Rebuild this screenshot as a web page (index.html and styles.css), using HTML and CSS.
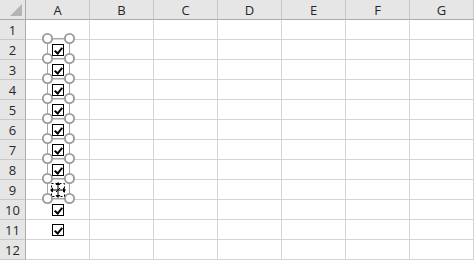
FILE: index.html
```html
<!DOCTYPE html>
<html lang="en">
<head>
  <meta charset="UTF-8">
  <title>Checkboxes</title>
  <link rel="stylesheet" href="styles.css">
</head>
<body>
  <div class="sheet">
    <div class="grid">
      <!-- header row -->
      <div class="corner"><span class="corner-tri"></span></div>
      <div class="col-head">A</div>
      <div class="col-head">B</div>
      <div class="col-head">C</div>
      <div class="col-head">D</div>
      <div class="col-head">E</div>
      <div class="col-head">F</div>
      <div class="col-head">G</div>

      <div class="row-head">1</div><div class="cell"></div><div class="cell"></div><div class="cell"></div><div class="cell"></div><div class="cell"></div><div class="cell"></div><div class="cell"></div>
      <div class="row-head">2</div><div class="cell"><span class="box"></span></div><div class="cell"></div><div class="cell"></div><div class="cell"></div><div class="cell"></div><div class="cell"></div><div class="cell"></div>
      <div class="row-head">3</div><div class="cell"><span class="box"></span></div><div class="cell"></div><div class="cell"></div><div class="cell"></div><div class="cell"></div><div class="cell"></div><div class="cell"></div>
      <div class="row-head">4</div><div class="cell"><span class="box"></span></div><div class="cell"></div><div class="cell"></div><div class="cell"></div><div class="cell"></div><div class="cell"></div><div class="cell"></div>
      <div class="row-head">5</div><div class="cell"><span class="box"></span></div><div class="cell"></div><div class="cell"></div><div class="cell"></div><div class="cell"></div><div class="cell"></div><div class="cell"></div>
      <div class="row-head">6</div><div class="cell"><span class="box"></span></div><div class="cell"></div><div class="cell"></div><div class="cell"></div><div class="cell"></div><div class="cell"></div><div class="cell"></div>
      <div class="row-head">7</div><div class="cell"><span class="box"></span></div><div class="cell"></div><div class="cell"></div><div class="cell"></div><div class="cell"></div><div class="cell"></div><div class="cell"></div>
      <div class="row-head">8</div><div class="cell"><span class="box"></span></div><div class="cell"></div><div class="cell"></div><div class="cell"></div><div class="cell"></div><div class="cell"></div><div class="cell"></div>
      <div class="row-head">9</div><div class="cell"></div><div class="cell"></div><div class="cell"></div><div class="cell"></div><div class="cell"></div><div class="cell"></div><div class="cell"></div>
      <div class="row-head">10</div><div class="cell"><span class="box"></span></div><div class="cell"></div><div class="cell"></div><div class="cell"></div><div class="cell"></div><div class="cell"></div><div class="cell"></div>
      <div class="row-head">11</div><div class="cell"><span class="box"></span></div><div class="cell"></div><div class="cell"></div><div class="cell"></div><div class="cell"></div><div class="cell"></div><div class="cell"></div>
      <div class="row-head">12</div><div class="cell"></div><div class="cell"></div><div class="cell"></div><div class="cell"></div><div class="cell"></div><div class="cell"></div><div class="cell"></div>
    </div>

    <!-- selection handles drawn over the checkboxes in A2:A9 -->
    <svg class="selection" width="475" height="261" viewBox="0 0 475 261">
      <g stroke="#a6a6a6" stroke-width="1" fill="none">
        <line x1="47.5" y1="38.5" x2="47.5" y2="198.5"/>
        <line x1="69.5" y1="38.5" x2="69.5" y2="198.5"/>
        <line x1="47.5" y1="38.5" x2="69.5" y2="38.5"/>
        <line x1="47.5" y1="58.5" x2="69.5" y2="58.5"/>
        <line x1="47.5" y1="78.5" x2="69.5" y2="78.5"/>
        <line x1="47.5" y1="98.5" x2="69.5" y2="98.5"/>
        <line x1="47.5" y1="118.5" x2="69.5" y2="118.5"/>
        <line x1="47.5" y1="138.5" x2="69.5" y2="138.5"/>
        <line x1="47.5" y1="158.5" x2="69.5" y2="158.5"/>
        <line x1="47.5" y1="178.5" x2="69.5" y2="178.5"/>
        <line x1="47.5" y1="198.5" x2="69.5" y2="198.5"/>
      </g>
      <g stroke="#9c9c9c" stroke-width="1.9" fill="#fff">
        <circle cx="47.5" cy="38.5" r="4.6"/><circle cx="69.5" cy="38.5" r="4.6"/>
        <circle cx="47.5" cy="58.5" r="4.6"/><circle cx="69.5" cy="58.5" r="4.6"/>
        <circle cx="47.5" cy="78.5" r="4.6"/><circle cx="69.5" cy="78.5" r="4.6"/>
        <circle cx="47.5" cy="98.5" r="4.6"/><circle cx="69.5" cy="98.5" r="4.6"/>
        <circle cx="47.5" cy="118.5" r="4.6"/><circle cx="69.5" cy="118.5" r="4.6"/>
        <circle cx="47.5" cy="138.5" r="4.6"/><circle cx="69.5" cy="138.5" r="4.6"/>
        <circle cx="47.5" cy="158.5" r="4.6"/><circle cx="69.5" cy="158.5" r="4.6"/>
        <circle cx="47.5" cy="178.5" r="4.6"/><circle cx="69.5" cy="178.5" r="4.6"/>
        <circle cx="47.5" cy="198.5" r="4.6"/><circle cx="69.5" cy="198.5" r="4.6"/>
      </g>
      <!-- move cursor over the checkbox in A9 -->
      <g stroke="#000" fill="none" stroke-width="1">
        <rect x="51.5" y="183.5" width="13" height="13" stroke-dasharray="2 2"/>
        <line x1="58" y1="184" x2="58" y2="196"/>
        <line x1="52" y1="190" x2="64" y2="190"/>
        <line x1="56" y1="192" x2="60" y2="188"/>
      </g>
      <g fill="#000">
        <polygon points="58,182 55.5,185 60.5,185"/>
        <polygon points="58,198 55.5,195 60.5,195"/>
        <polygon points="50,190 53,187.5 53,192.5"/>
        <polygon points="66,190 63,187.5 63,192.5"/>
      </g>
    </svg>
  </div>
</body>
</html>
```

FILE: styles.css
```css
* {
  margin: 0;
  padding: 0;
  box-sizing: border-box;
}

body {
  background-color: #fff;
  font-family: "Open Sans", "Liberation Sans", Arial, sans-serif;
}

.sheet {
  position: relative;
  width: 475px;
  height: 261px;
  overflow: hidden;
}

.grid {
  display: grid;
  grid-template-columns: 26px repeat(7, 64px);
  grid-template-rows: repeat(13, 20px);
}

/* Header cells */
.corner,
.col-head,
.row-head {
  background-color: #e6e6e6;
  color: #262626;
  font-size: 13px;
  display: flex;
  align-items: center;
  justify-content: center;
}

.corner {
  border-right: 1px solid #ababab;
  border-bottom: 1px solid #ababab;
  position: relative;
}

.corner-tri {
  position: absolute;
  right: 3px;
  bottom: 3px;
  width: 0;
  height: 0;
  border-left: 12px solid transparent;
  border-bottom: 12px solid #b4b4b4;
}

.col-head {
  border-right: 1px solid #c8c8c8;
  border-bottom: 1px solid #ababab;
}

.row-head {
  border-right: 1px solid #ababab;
  border-bottom: 1px solid #c8c8c8;
}

.cell {
  border-right: 1px solid #d4d4d4;
  border-bottom: 1px solid #d4d4d4;
  display: flex;
  align-items: center;
  justify-content: center;
}

/* Checkbox control */
.box {
  position: relative;
  width: 12px;
  height: 12px;
  border: 1px solid #000;
  background-color: #fff;
  margin-left: 1px;
}

.box::after {
  content: "";
  position: absolute;
  left: 3px;
  top: 1px;
  width: 3px;
  height: 6px;
  border-right: 2px solid #000;
  border-bottom: 2px solid #000;
  transform: rotate(40deg);
}

.selection {
  position: absolute;
  top: 0;
  left: 0;
}
```
